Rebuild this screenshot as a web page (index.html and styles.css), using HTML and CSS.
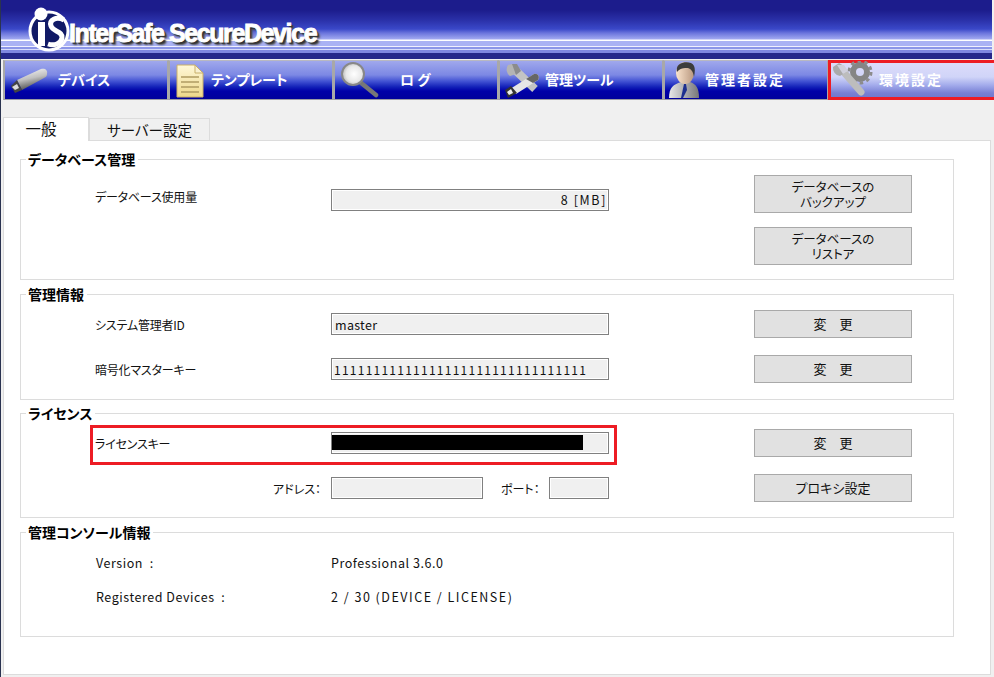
FILE: index.html
```html
<!DOCTYPE html>
<html lang="ja">
<head>
<meta charset="utf-8">
<title>InterSafe SecureDevice</title>
<link rel="stylesheet" href="styles.css">
</head>
<body>
<div class="app">
  <header class="banner">
    <svg class="logo-mark" width="46" height="50" viewBox="0 0 46 50">
      <circle cx="23" cy="28" r="19" fill="#111a66" stroke="#fff" stroke-width="3"/>
      <circle cx="15" cy="11" r="6.5" fill="#fff"/>
      <rect x="12" y="19" width="7" height="24" fill="#fff"/>
      <path d="M38 17C30 13 23 17 25 23C27 29 37 28 36 35C35 41 28 43 22 41" fill="none" stroke="#fff" stroke-width="5"/>
    </svg>
    <span class="logo-text">InterSafe SecureDevice</span>
  </header>
  <nav class="nav">
    <a class="nav-item">
      <svg class="nav-icon" width="44" height="36" viewBox="0 0 44 36">
        <defs><linearGradient id="g1" x1="0.3" y1="0" x2="0.6" y2="1"><stop offset="0" stop-color="#f4f4f4"/><stop offset=".45" stop-color="#c0c0c0"/><stop offset="1" stop-color="#3c3c3c"/></linearGradient></defs>
        <path d="M10 18L34 7C38 6 41 8 40 12C40 14 39 15 37 16L15 28Z" fill="url(#g1)"/>
        <path d="M4 24L10 18L15 28L8 31Z" fill="#444"/>
        <path d="M5 25L10 22L12 26L8 28Z" fill="#ddd"/>
      </svg>
      <span class="nav-label nav-label-device">デバイス</span>
    </a>
    <a class="nav-item">
      <svg class="nav-icon nav-icon-doc" width="44" height="36" viewBox="0 0 44 36">
        <defs><linearGradient id="g2" x1="0" y1="0" x2="0" y2="1"><stop offset="0" stop-color="#fff8d8"/><stop offset="1" stop-color="#eed88a"/></linearGradient></defs>
        <path d="M7 3H25L33 11V35H7Z" fill="url(#g2)" stroke="#c9b06a"/>
        <path d="M25 3V11H33Z" fill="#f8f0d0" stroke="#c9b06a"/>
        <path d="M11 15H29M11 20H29M11 25H29M11 30H29" stroke="#b09c62" stroke-width="1.6"/>
      </svg>
      <span class="nav-label nav-label-template">テンプレート</span>
    </a>
    <a class="nav-item">
      <svg class="nav-icon" width="44" height="36" viewBox="0 0 44 36">
        <defs><radialGradient id="g3" cx=".55" cy=".5" r=".6"><stop offset="0" stop-color="#fff"/><stop offset=".6" stop-color="#e8e8e8"/><stop offset="1" stop-color="#aaa"/></radialGradient></defs>
        <path d="M23 20L39 33" stroke="#777" stroke-width="4.5" stroke-linecap="round"/>
        <circle cx="16" cy="12" r="11" fill="url(#g3)" stroke="#888" stroke-width="2"/>
      </svg>
      <span class="nav-label nav-label-log">ログ</span>
    </a>
    <a class="nav-item">
      <svg class="nav-icon" width="44" height="36" viewBox="0 0 44 36">
        <path d="M11 6L33 27" stroke="#c4c4c4" stroke-width="8"/>
        <path d="M6 3A8 8 0 0 0 8 14L14 12L14 6L10 2Z" fill="#b4b4b4"/>
        <path d="M10 2L15 2L19 9L14 13Z" fill="#8c8c8c"/>
        <path d="M8 27L32 12C36 11 38 15 36 18L14 32Z" fill="#e6e6e6"/>
        <path d="M24 17L32 12C36 11 38 15 36 18L31 21Z" fill="#666"/>
        <path d="M3 28L9 24L15 31L6 36Z" fill="#333"/>
        <path d="M5 30L9 27L11 31L7 33Z" fill="#eee"/>
      </svg>
      <span class="nav-label nav-label-tool">管理ツール</span>
    </a>
    <a class="nav-item">
      <svg class="nav-icon nav-icon-person" width="44" height="36" viewBox="0 0 44 36">
        <defs>
          <linearGradient id="g5" x1="0" y1="0" x2="1" y2="0"><stop offset="0" stop-color="#e8e8e8"/><stop offset=".6" stop-color="#a4a4a8"/><stop offset="1" stop-color="#777"/></linearGradient>
          <linearGradient id="g6" x1="0" y1="0" x2="1" y2="0"><stop offset="0" stop-color="#fbe4cc"/><stop offset="1" stop-color="#b89880"/></linearGradient>
        </defs>
        <path d="M6 36C6 26 10 22 19 20H27C33 22 36 26 36 36Z" fill="url(#g5)"/>
        <ellipse cx="22" cy="11" rx="9" ry="11" fill="url(#g6)"/>
        <path d="M14 10C12 1 22 -1 28 1C33 3 32 10 31 15C30 9 28 7 25 6C21 6 17 6 14 10Z" fill="#3c3c3c"/>
        <path d="M21 22H23L24 28L20 36H18Z" fill="#1d2f8f"/>
      </svg>
      <span class="nav-label nav-label-admin">管理者設定</span>
    </a>
    <a class="nav-item nav-item-active">
      <svg class="nav-icon" width="44" height="36" viewBox="0 0 44 36">
        <circle cx="29" cy="11" r="7" fill="none" stroke="#858585" stroke-width="6"/>
        <circle cx="29" cy="11" r="11" fill="none" stroke="#8c8c8c" stroke-width="3" stroke-dasharray="3.5 3.5"/>
        <path d="M10 8L30 31" stroke="#bdbdbd" stroke-width="7" stroke-linecap="round"/>
        <path d="M2 6A8 8 0 0 0 9 15L15 11L13 5L8 2Z" fill="#aaa"/>
        <path d="M6 4L13 4L17 10L12 13Z" fill="#d0d0dc"/>
      </svg>
      <span class="nav-label nav-label-env">環境設定</span>
    </a>
  </nav>
  <div class="tabs">
    <span class="tab tab-active">一般</span>
    <span class="tab">サーバー設定</span>
  </div>
  <main class="panel">
    <fieldset class="group group-db">
      <legend>データベース管理</legend>
      <div class="row row-db">
        <span class="label">データベース使用量</span>
        <span class="field field-right">8 [MB]</span>
        <div class="stack">
          <button class="btn btn-tall">データベースの<br>バックアップ</button>
          <button class="btn btn-tall">データベースの<br>リストア</button>
        </div>
      </div>
    </fieldset>
    <fieldset class="group group-admin">
      <legend>管理情報</legend>
      <div class="row">
        <span class="label">システム管理者ID</span>
        <span class="field">master</span>
        <button class="btn">変　更</button>
      </div>
      <div class="row">
        <span class="label">暗号化マスターキー</span>
        <span class="field field-key">11111111111111111111111111111111</span>
        <button class="btn">変　更</button>
      </div>
    </fieldset>
    <fieldset class="group group-license">
      <legend>ライセンス</legend>
      <div class="row row-highlight">
        <span class="label">ライセンスキー</span>
        <span class="field field-masked"><span class="mask"></span></span>
        <button class="btn">変　更</button>
      </div>
      <div class="row">
        <span class="addr">
          <span class="addr-label">アドレス：</span>
          <span class="field field-addr"></span>
          <span class="addr-label addr-port">ポート：</span>
          <span class="field field-port"></span>
        </span>
        <button class="btn">プロキシ設定</button>
      </div>
    </fieldset>
    <fieldset class="group group-info">
      <legend>管理コンソール情報</legend>
      <div class="info">
        <span>Version&nbsp;&nbsp;:</span><span>Professional 3.6.0</span>
        <span>Registered Devices&nbsp;&nbsp;:</span><span class="info-wide">2 / 30 (DEVICE / LICENSE)</span>
      </div>
    </fieldset>
  </main>
</div>
</body>
</html>
```
FILE: styles.css
```css
* { box-sizing: border-box; }
html, body { margin: 0; height: 100%; }
body {
  background: #f0f0f0;
  font-family: "Noto Sans CJK JP", "Liberation Sans", sans-serif;
  font-size: 12px;
  font-feature-settings: "palt";
  color: #111;
  overflow: hidden;
}
.app {
  width: 994px;
  height: 677px;
  display: flex;
  flex-direction: column;
  padding-left: 2px;
  border-left: 1px solid #2a3350;
  background: #f0f0f0;
}
.banner {
  height: 59px;
  display: flex;
  align-items: flex-start;
  padding-left: 25px;
  background: linear-gradient(180deg,
    #1c1c8c 0, #1c1c8c 10px, #2a30a8 20px, #3a48c8 29px, #6a74dc 33px, #a0a8f0 39px,
    #fff 40px, #fff 41px, #aab2f4 41px, #aab2f4 46px, #f0f0ff 46px, #f0f0ff 47px,
    #8c96e8 47px, #8c96e8 49px, #d8dcfa 49px, #d8dcfa 50px, #8088e0 50px, #8088e0 53px,
    #26288a 53px, #26288a 59px);
  margin-left: -2px;
  margin-right: 2px;
}
.logo-mark { margin-top: 3px; flex: none; }
.logo-text {
  margin: 18px 0 0 -3px;
  font-family: "Liberation Sans", sans-serif;
  font-feature-settings: normal;
  font-size: 25px;
  line-height: 30px;
  font-weight: 700;
  letter-spacing: -1.4px;
  color: #fff;
  white-space: nowrap;
  -webkit-text-stroke: 0.9px #fff;
  text-shadow: 2px 2px 1px #333, 3px 3px 2px #555;
}
.nav {
  margin-top: 1px;
  height: 40px;
  display: grid;
  grid-template-columns: 165px 165px 165px 165px 165px 166px;
  flex: none;
}
.nav-item {
  position: relative;
  display: flex;
  align-items: center;
  height: 40px;
  border-top: 1px solid #b8b8c0;
  border-bottom: 1px solid #9a9aa4;
  border-left: 2px solid #a8a8a8;
  border-right: 1px solid #a8a8a8;
  background: linear-gradient(180deg, #a0a8ec 0, #7c88e4 14px, #4454d4 20px, #1220b8 26px, #0000a8 30px, #00009c 38px);
}
.nav-icon { position: absolute; left: 2px; top: 1px; }
.nav-icon-doc { left: 0; }
.nav-icon-person { left: -2px; }
.nav-label {
  position: absolute;
  top: 9px;
  font-size: 14px;
  line-height: 18px;
  font-weight: 700;
  color: #fff;
  white-space: nowrap;
}
.nav-label-device { left: 53px; }
.nav-label-template { left: 41px; }
.nav-label-log { left: 65px; letter-spacing: 3px; }
.nav-label-tool { left: 45px; }
.nav-label-admin { left: 40px; letter-spacing: 2px; }
.nav-label-env { left: 48px; letter-spacing: 2px; }
.nav-item-active {
  border: 3px solid #ed1c24;
  border-right: 0;
  background: linear-gradient(180deg, #dcdcfa 0, #d0d4f8 14px, #a4acec 22px, #7880d4 30px, #6c74c8 38px);
}
.nav-item-active .nav-icon { left: 0; top: -2px; }
.nav-item-active .nav-label { top: 7px; }
.tabs {
  display: flex;
  align-items: flex-end;
  height: 40px;
  flex: none;
}
.tab {
  width: 121px;
  height: 22px;
  border: 1px solid #dcdcdc;
  border-bottom: 0;
  background: #f0f0f0;
  font-size: 14.5px;
  line-height: 21px;
  text-align: center;
}
.tab-active {
  width: 86px;
  height: 24px;
  background: #fff;
  position: relative;
  top: 1px;
  font-size: 15.5px;
  padding-right: 10px;
}
.panel {
  flex: 1;
  margin-right: 3px;
  margin-bottom: 2px;
  background: #fff;
  border: 1px solid #dcdcdc;
  padding: 9px 36px 0 16px;
  display: flex;
  flex-direction: column;
}
.group {
  margin: 0;
  padding: 0;
  border: 1px solid #dcdcdc;
  min-width: 0;
  position: relative;
}
.group legend {
  margin-left: 5px;
  padding: 0 3px 0 2px;
  height: 18px;
  font-size: 14px;
  line-height: 18px;
  font-weight: 700;
  color: #000;
}
.group-db { height: 130px; }
.group-admin { height: 115px; margin-top: 5px; }
.group-license { height: 114px; margin-top: 4px; }
.group-info { height: 114px; margin-top: 5px; }
.row {
  display: grid;
  grid-template-columns: 236px 278px 145px 158px;
  align-items: center;
  height: 28px;
  margin-left: 74px;
}
.row > :last-child { grid-column: 4; }
.group-db .row { height: auto; align-items: start; padding-top: 8px; }
.group-db .label, .group-db .field { margin-top: 13px; }
.group-admin .row:first-of-type { margin-top: 7px; }
.group-admin .row + .row { margin-top: 17px; }
.group-license .row:first-of-type { margin-top: 7px; }
.group-license .row + .row { margin-top: 17px; }
.label { white-space: nowrap; line-height: 16px; font-size: 12px; letter-spacing: -0.2px; }
.group-admin .label, .group-license .label { margin-top: 2px; }
.field {
  display: block;
  height: 22px;
  border: 1px solid #808080;
  background: #f0f0f0;
  box-shadow: inset 0 0 0 1px #fff;
  font-size: 12.5px;
  line-height: 22px;
  padding: 0 3px;
  white-space: nowrap;
  overflow: hidden;
  letter-spacing: 0.3px;
}
.field-right { text-align: right; letter-spacing: 1.6px; padding-right: 1px; line-height: 20px; }
.field-key { font-size: 12px; letter-spacing: 1.25px; padding-left: 2px; }
.field-masked { padding: 2px 0 0 0; }
.mask { display: block; height: 15px; width: 251px; background: #000; }
.row-highlight { position: relative; }
.row-highlight::before {
  content: "";
  box-sizing: border-box;
  position: absolute;
  left: -5px;
  top: -4px;
  width: 527px;
  height: 40px;
  border: 3px solid #ed1c24;
  pointer-events: none;
}
.stack { display: flex; flex-direction: column; gap: 14px; }
.group-db .stack { margin-top: -1px; }
.btn {
  height: 28px;
  width: 158px;
  padding: 0 0 2px;
  border: 1px solid #a9a9a9;
  border-radius: 0;
  background: #e1e1e1;
  font-family: inherit;
  font-feature-settings: inherit;
  font-size: 13px;
  line-height: 15px;
  color: #111;
}
.btn-tall { height: 38px; font-size: 12.5px; padding: 0; }
.addr {
  display: flex;
  align-items: center;
  grid-column: 1 / 3;
}
.addr-label { font-size: 12px; margin: 1px 0 0 178px; width: 58px; white-space: nowrap; }
.addr-port { margin-left: 18px; width: 48px; }
.field-addr { width: 152px; }
.field-port { width: 60px; }
.info {
  display: grid;
  grid-template-columns: 235px auto;
  row-gap: 18px;
  justify-content: start;
  margin: 14px 0 0 75px;
  font-size: 12.5px;
  line-height: 16px;
  letter-spacing: 0.55px;
}
.info-wide { letter-spacing: 1.5px; }
```
